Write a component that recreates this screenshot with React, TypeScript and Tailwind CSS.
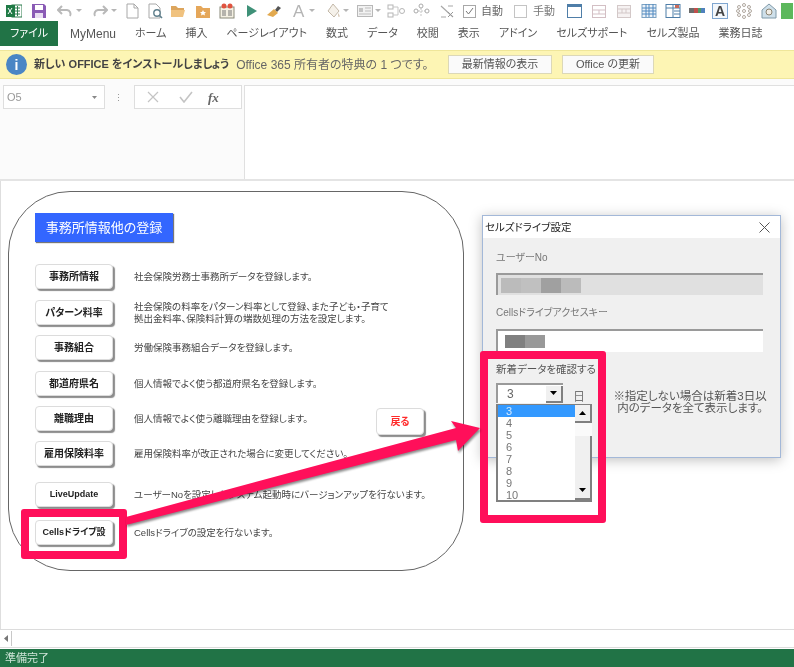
const tabs = ["MyMenu", "ホーム", "挿入", "ページレイアウト", "数式", "データ", "校閲", "表示", "アドイン", "セルズサポート", "セルズ製品", "業務日誌"];

const rows = [
  { label: "事務所情報", text: ["社会保険労務士事務所データを登録します。"], top: "mt-[22px]" },
  { label: "パターン料率", text: ["社会保険の料率をパターン料率として登録、また子ども・子育て", "拠出金料率、保険料計算の端数処理の方法を設定します。"], top: "mt-[11px]" },
  { label: "事務組合", text: ["労働保険事務組合データを登録します。"], top: "mt-[10px]" },
  { label: "都道府県名", text: ["個人情報でよく使う都道府県名を登録します。"], top: "mt-[11px]" },
  { label: "離職理由", text: ["個人情報でよく使う離職理由を登録します。"], top: "mt-[10px]" },
  { label: "雇用保険料率", text: ["雇用保険料率が改正された場合に変更してください。"], top: "mt-[10px]" },
  { label: "LiveUpdate", text: ["ユーザーNoを設定したシステム起動時にバージョンアップを行ないます。"], top: "mt-[16px]", small: true },
  { label: "Cellsドライブ設", text: ["Cellsドライブの設定を行ないます。"], top: "mt-[13px]", small: true },
];

const listItems = ["3", "4", "5", "6", "7", "8", "9", "10"];

function Caret({ className = "" }: { className?: string }) {
  return (
    <svg width="6" height="4" viewBox="0 0 6 4" className={className}>
      <path d="M0 0h6L3 3z" fill="#b5b5b5" />
    </svg>
  );
}

function Icon({ w = 16, className = "", children }: { w?: number; className?: string; children: React.ReactNode }) {
  return (
    <svg width={w} height="16" viewBox={`0 0 ${w} 16`} className={`shrink-0 ${className}`}>
      {children}
    </svg>
  );
}

function Toolbar() {
  return (
    <div className="flex h-[21px] items-center pl-[6px] pt-[1px]">
      <Icon>
        <rect x="6" y="2" width="10" height="12" fill="#fff" stroke="#2a7a4b" />
        <path d="M9 5h5M9 8h5M9 11h5M11.5 3v10" stroke="#2a7a4b" />
        <rect x="0" y="2" width="9" height="12" fill="#1f7a45" />
        <path d="M2 5l4 6M6 5l-4 6" stroke="#fff" />
      </Icon>
      <Icon className="ml-[9px]">
        <path d="M1 1h12l2 2v12H1z" fill="#8a5bb5" />
        <rect x="4" y="2" width="8" height="5" fill="#fff" />
        <rect x="4" y="10" width="8" height="5" fill="#e9dff2" />
      </Icon>
      <Icon className="ml-[10px]">
        <path d="M5 3L1 7l4 4" fill="none" stroke="#b9b9b9" strokeWidth="2" />
        <path d="M2 7h8a4 4 0 0 1 3 6" fill="none" stroke="#b9b9b9" strokeWidth="2" />
      </Icon>
      <Caret className="ml-[3px]" />
      <Icon className="ml-[10px]">
        <path d="M11 3l4 4-4 4" fill="none" stroke="#b9b9b9" strokeWidth="2" />
        <path d="M14 7H6a4 4 0 0 0-3 6" fill="none" stroke="#b9b9b9" strokeWidth="2" />
      </Icon>
      <Caret className="ml-[3px]" />
      <Icon w={13} className="ml-[9px]">
        <path d="M1 1h7l4 4v10H1z" fill="#fff" stroke="#a8a8a8" />
        <path d="M8 1v4h4" fill="none" stroke="#a8a8a8" />
      </Icon>
      <Icon className="ml-[9px]">
        <path d="M1 1h7l4 4v10H1z" fill="#fff" stroke="#a8a8a8" />
        <circle cx="9" cy="10" r="3.2" fill="#fff" stroke="#5f7f8c" strokeWidth="1.4" />
        <path d="M11 12l3 3" stroke="#5f7f8c" strokeWidth="1.6" />
      </Icon>
      <Icon className="ml-[6px]">
        <path d="M1 3h5l2 2h6v2H1z" fill="#dca55d" />
        <path d="M1 7h14l-2 7H1z" fill="#f0c27f" />
      </Icon>
      <Icon className="ml-[9px]">
        <path d="M1 3h5l2 2h7v10H1z" fill="#e5a75a" />
        <path d="M8 7l1 2h2l-1.500 1.500.5 2L8 11.500 6 12.500l.5-2L5 9h2z" fill="#fff" />
      </Icon>
      <Icon className="ml-[8px]">
        <rect x="1" y="4" width="14" height="11" fill="#f4f0e3" stroke="#8a8a7a" />
        <path d="M3 8h4M3 10h4M3 12h4M9 8h4M9 10h4M9 12h4" stroke="#777" />
        <circle cx="5" cy="3" r="2.500" fill="#e0533f" />
        <circle cx="11" cy="3" r="2.500" fill="#e0533f" />
      </Icon>
      <Icon w={10} className="ml-[12px]">
        <path d="M0 2l10 6-10 6z" fill="#3f9178" />
      </Icon>
      <Icon className="ml-[9px]">
        <path d="M9 7l3-4 3 2-4 4z" fill="#555" />
        <path d="M1 12l7-6 4 4-5 4z" fill="#e2a94f" />
      </Icon>
      <span className="ml-[11px] w-[12px] text-[17px] leading-none text-[#b4b4b4]">A</span>
      <Caret className="ml-[4px]" />
      <Icon className="ml-[10px]">
        <path d="M8 1l6 7-5 6-6-6z" fill="#f5f1ea" stroke="#c3b8a8" />
        <path d="M13 10c2 2 2 4 1 4s-1-2-1-4z" fill="#d6c7b4" />
      </Icon>
      <Caret className="ml-[2px]" />
      <Icon className="ml-[8px]">
        <rect x="0.500" y="2.500" width="15" height="11" fill="#f2f2f2" stroke="#b8b8b8" />
        <rect x="2" y="5" width="4" height="4" fill="#c4c4c4" />
        <path d="M8 5h6M8 8h6M2 11h12" stroke="#bdbdbd" />
      </Icon>
      <Caret className="ml-[2px]" />
      <Icon w={18} className="ml-[6px]">
        <rect x="1" y="2" width="5" height="4" fill="#fff" stroke="#b5b5b5" />
        <rect x="1" y="10" width="5" height="4" fill="#fff" stroke="#b5b5b5" />
        <path d="M6 4h5M6 12h5M11 4v8" stroke="#c5c5c5" />
        <circle cx="15" cy="8" r="2.500" fill="#fff" stroke="#b5b5b5" />
      </Icon>
      <Icon w={18} className="ml-[8px]">
        <path d="M8 2v12M2 8h12" stroke="#c5c5c5" strokeDasharray="2 1" />
        <circle cx="8" cy="3" r="2" fill="#fff" stroke="#aaa" />
        <circle cx="3" cy="8" r="2" fill="#fff" stroke="#aaa" />
        <circle cx="14" cy="8" r="2" fill="#fff" stroke="#aaa" />
      </Icon>
      <Icon w={18} className="ml-[7px]">
        <path d="M3 3l12 11M15 3h-5M3 14h5" stroke="#a8a8a8" strokeWidth="1.200" />
        <path d="M10 9l5 5M15 9l-5 5" stroke="#999" />
      </Icon>
      <span className="ml-[7px] flex h-[13px] w-[13px] shrink-0 items-center justify-center border border-[#a8a8a8] bg-white">
        <svg width="9" height="8" viewBox="0 0 9 8">
          <path d="M1 4l2.500 3L8 1" fill="none" stroke="#777" />
        </svg>
      </span>
      <span className="ml-[5px] text-[11px] leading-none text-[#666]">自動</span>
      <span className="ml-[11px] h-[13px] w-[13px] shrink-0 border border-[#c4c4c4] bg-white" />
      <span className="ml-[6px] text-[11px] leading-none text-[#777]">手動</span>
      <Icon className="ml-[12px]">
        <rect x="0.500" y="1.500" width="14" height="13" fill="#fff" stroke="#4f7ea8" />
        <rect x="0.500" y="1.500" width="14" height="2.500" fill="#4f7ea8" />
      </Icon>
      <Icon className="ml-[9px]">
        <rect x="0.500" y="2.500" width="13" height="12" fill="#fff" stroke="#d3bfc4" />
        <path d="M0 7h14M0 11h14M7 7v4" stroke="#d3bfc4" />
      </Icon>
      <Icon className="ml-[9px]">
        <rect x="0.500" y="2.500" width="13" height="12" fill="#f6f2f2" stroke="#d3c8c8" />
        <path d="M0 6h14M0 10h14M5 6v4M9 6v4" stroke="#d3c8c8" />
      </Icon>
      <Icon className="ml-[8px]">
        <rect x="1" y="1.500" width="14" height="13" fill="#eef3f8" stroke="#7da3c4" />
        <path d="M1 5h14M1 8h14M1 11h14M5 1v13M8 1v13M12 1v13" stroke="#4f88c0" />
      </Icon>
      <Icon className="ml-[8px]">
        <rect x="1" y="1.500" width="14" height="13" fill="#fff" stroke="#4f7ea8" />
        <path d="M8 1v14M1 5h14M9 8h6M9 11h6" stroke="#4f7ea8" />
        <rect x="10" y="2" width="4" height="3" fill="#c86a5a" />
      </Icon>
      <Icon className="ml-[8px]">
        <rect x="0" y="5" width="5" height="5" fill="#6b6b6b" />
        <rect x="5" y="5" width="4" height="5" fill="#c0504d" />
        <rect x="9" y="5" width="3" height="5" fill="#4f9b6a" />
        <rect x="12" y="5" width="4" height="5" fill="#4f81bd" />
      </Icon>
      <span className="ml-[7px] flex h-[16px] w-[16px] shrink-0 items-center justify-center border border-[#7fa6d0] bg-[#f3f7fb] text-[14px] font-bold leading-none text-[#444]">A</span>
      <Icon className="ml-[8px]">
        <g fill="none" stroke="#b0a8a0">
          <circle cx="3" cy="4" r="1.500" /><circle cx="8" cy="2" r="1.500" /><circle cx="13" cy="4" r="1.500" />
          <circle cx="2" cy="8" r="1.500" /><circle cx="8" cy="8" r="1.500" /><circle cx="14" cy="8" r="1.500" />
          <circle cx="3" cy="12" r="1.500" /><circle cx="8" cy="14" r="1.500" /><circle cx="13" cy="12" r="1.500" />
        </g>
      </Icon>
      <Icon className="ml-[9px]">
        <path d="M8 1l7 6v8H1V7z" fill="#cfe0ea" stroke="#7f99a8" />
        <circle cx="8" cy="9" r="3" fill="#f2eee6" stroke="#8a8270" />
      </Icon>
      <span className="ml-[4px] h-[16px] w-[12px] shrink-0 bg-[#5cb85c]" />
    </div>
  );
}

function PanelButton({ label, small }: { label: string; small?: boolean }) {
  return (
    <div className={`flex h-[25px] w-[78px] shrink-0 items-center justify-center rounded-[4px] border border-[#dcdcdc] bg-white font-bold leading-none text-[#222] shadow-[2px_2px_1px_#8c8c8c] ${small ? "text-[9px]" : "text-[10px]"}`}>
      {label}
    </div>
  );
}

function ListArrow({ up }: { up?: boolean }) {
  return (
    <div className="flex h-[18px] items-center justify-center border-r-2 border-b-2 border-[#808080] bg-[#f0f0f0]">
      <svg width="7" height="4" viewBox="0 0 7 4">
        <path d={up ? "M0 4h7L3.500 0z" : "M0 0h7L3.500 4z"} fill="#000" />
      </svg>
    </div>
  );
}

function Dialog() {
  return (
    <div className="absolute left-[481px] top-[34px] h-[243px] w-[299px] border border-[#a3b8d8] bg-[#f0f0f0] shadow-[0_2px_12px_rgba(0,0,0,0.25)]">
      <div className="flex h-[22px] items-center justify-between bg-white pl-[2px] pr-[10px] text-[10.500px] leading-none text-[#222]">
        <span>セルズドライブ設定</span>
        <svg width="11" height="11" viewBox="0 0 11 11">
          <path d="M0.500 0.500l10 10M10.500 0.500l-10 10" stroke="#555" />
        </svg>
      </div>
      <div className="flex flex-col pl-[13px] text-[10px] leading-[12px] text-[#777]">
        <div className="mt-[14px]">ユーザーNo</div>
        <div className="mt-[9px] flex h-[22px] w-[267px] items-center border-t-2 border-l-2 border-[#9a9a9a] bg-[#e0e0e0] pl-[3px]">
          <span className="h-[15px] w-[20px] bg-[#bbbbbb]" />
          <span className="h-[15px] w-[20px] bg-[#c0c0c0]" />
          <span className="h-[15px] w-[20px] bg-[#a0a0a0]" />
          <span className="h-[15px] w-[20px] bg-[#bbbbbb]" />
        </div>
        <div className="mt-[12px]">Cellsドライブアクセスキー</div>
        <div className="mt-[10px] flex h-[23px] w-[267px] items-center border-t-2 border-l-2 border-[#9a9a9a] bg-white pl-[7px]">
          <span className="h-[13px] w-[20px] bg-[#808080]" />
          <span className="h-[13px] w-[20px] bg-[#999999]" />
        </div>
        <div className="mt-[11px] whitespace-nowrap text-[10.500px] text-[#555]">新着データを確認する</div>
        <div className="relative mt-[8px] flex items-start">
          <div className="flex h-[20px] w-[67px] shrink-0 items-center border-t-2 border-l-2 border-[#9a9a9a] bg-white pl-[9px] text-[12px] text-[#666]">
            <span className="flex-1">3</span>
            <span className="flex h-[17px] w-[17px] items-center justify-center border-r-2 border-b-2 border-[#808080] bg-[#f0f0f0]">
              <svg width="7" height="4" viewBox="0 0 7 4">
                <path d="M0 0h7L3.500 4z" fill="#000" />
              </svg>
            </span>
          </div>
          <span className="ml-[10px] mt-[8px] text-[12px] text-[#777]">日</span>
          <div className="ml-[24px] mt-[7px] w-[162px] text-center text-[11.500px] text-[#555]">
            ※指定しない場合は新着3日以
            <br />
            内のデータを全て表示します。
          </div>
          {/* dropdown list */}
          <div className="absolute left-0 top-[21px] flex h-[98px] w-[96px] border-2 border-t border-r-0 border-[#808080] bg-white text-[11px] text-[#777]">
            <div className="flex-1">
              {listItems.map((n, i) => (
                <div key={n} className={`h-[12px] pl-[8px] leading-[12px] ${i === 0 ? "bg-[#3399ff] text-[#d6e9ff]" : ""}`}>
                  {n}
                </div>
              ))}
            </div>
            <div className="flex w-[17px] flex-col bg-[#f0f0f0]">
              <ListArrow up />
              <div className="h-[13px] bg-[#fafafa]" />
              <div className="flex-1 border-r-2 border-[#808080]" />
              <ListArrow />
            </div>
          </div>
        </div>
      </div>
    </div>
  );
}

export default function App() {
  return (
    <div className="relative flex h-[667px] w-[794px] flex-col overflow-hidden bg-white font-['Liberation_Sans','Noto_Sans_CJK_JP',sans-serif] blur-[0.5px] [font-feature-settings:'palt']">
      <Toolbar />

      {/* ribbon tabs */}
      <div className="flex h-[25px] items-center pr-0 text-[11px] leading-none text-[#555]">
        <div className="flex h-[25px] w-[58px] items-center justify-center bg-[#217346] text-white">ファイル</div>
        <div className="ml-[12px] flex gap-[19px]">
          {tabs.map((t) => (
            <span key={t} className={`whitespace-nowrap ${t === "MyMenu" ? "text-[12px]" : ""}`}>{t}</span>
          ))}
        </div>
      </div>

      {/* update notice */}
      <div className="mt-[4px] flex h-[29px] items-center border-y border-[#efe69a] bg-[#fdf5b4] pl-[6px] text-[11px] leading-none">
        <span className="flex h-[21px] w-[21px] shrink-0 items-center justify-center rounded-full bg-[#4a86c5] text-[14px] font-bold text-white">i</span>
        <span className="ml-[7px] whitespace-nowrap font-bold text-[#444]">新しい OFFICE をインストールしましょう</span>
        <span className="ml-[7px] whitespace-nowrap text-[12px] text-[#666]">Office 365 所有者の特典の 1 つです。</span>
        <span className="absolute left-[448px] flex h-[19px] w-[104px] items-center justify-center border border-[#dcd8b8] bg-[#fafafa] text-[#555]">最新情報の表示</span>
        <span className="absolute left-[562px] flex h-[19px] w-[92px] items-center justify-center border border-[#dcd8b8] bg-[#fafafa] text-[#555]">Office の更新</span>
      </div>

      {/* formula bar */}
      <div className="flex h-[102px] border-b-2 border-[#e4e4e4] bg-[#fbfbfb] pt-[6px]">
        <div className="ml-[3px] flex h-[24px] w-[102px] items-center justify-between border border-[#dedede] bg-white px-[3px] text-[11px] text-[#999]">
          <span>O5</span>
          <svg width="5" height="3" viewBox="0 0 5 3" className="mr-[4px]">
            <path d="M0 0h5L2.500 3z" fill="#888" />
          </svg>
        </div>
        <div className="ml-[13px] flex h-[24px] flex-col justify-center gap-[2px]">
          <span className="h-[1px] w-[1px] bg-[#999]" />
          <span className="h-[1px] w-[1px] bg-[#999]" />
          <span className="h-[1px] w-[1px] bg-[#999]" />
        </div>
        <div className="ml-[15px] flex h-[24px] w-[108px] items-center border border-[#dedede] bg-white pl-[12px]">
          <svg width="12" height="12" viewBox="0 0 12 12">
            <path d="M1 1l10 10M11 1L1 11" stroke="#c4c4c4" strokeWidth="1.200" />
          </svg>
          <svg width="14" height="12" viewBox="0 0 14 12" className="ml-[20px]">
            <path d="M1 6l4 5 8-10" fill="none" stroke="#c4c4c4" strokeWidth="1.600" />
          </svg>
          <span className="ml-[15px] font-['Liberation_Serif',serif] text-[13px] font-bold italic leading-none text-[#666]">fx</span>
        </div>
        <div className="ml-[2px] flex-1 border-l border-t border-[#e0e0e0] bg-white" />
      </div>

      {/* sheet */}
      <div className="relative flex-1 border-l border-[#dedede] pl-[7px] pt-[10px]">
        <div className="relative flex h-[380px] w-[456px] flex-col rounded-[62px] border border-[#666] bg-white pl-[26px] pt-[21px]">
          <div className="flex h-[29px] w-[138px] items-center justify-center bg-[#3366ff] text-[13px] text-white shadow-[1px_1px_1px_#777]">事務所情報他の登録</div>
          {rows.map((r) => (
            <div key={r.label} className={`flex items-center ${r.top}`}>
              <PanelButton label={r.label} small={r.small} />
              <div className="ml-[21px] whitespace-nowrap text-[9.500px] leading-[12px] text-[#444]">
                {r.text.map((line) => (
                  <div key={line}>{line}</div>
                ))}
              </div>
            </div>
          ))}
          <div className="absolute left-[367px] top-[216px] flex h-[27px] w-[48px] items-center justify-center rounded-[4px] border border-[#dcdcdc] bg-white text-[10px] font-bold leading-none text-[#ff2a2a] shadow-[2px_2px_1px_#8c8c8c]">戻る</div>
        </div>

        <Dialog />

        {/* callout boxes and arrow */}
        <div className="absolute left-[20px] top-[328px] h-[50px] w-[106px] rounded-[3px] border-[8px] border-[#ff0f5a]" />
        <div className="absolute left-[479px] top-[170px] h-[172px] w-[126px] rounded-[3px] border-[8px] border-[#ff0f5a]" />
        <svg width="794" height="447" viewBox="0 0 794 447" className="pointer-events-none absolute left-0 top-0 drop-shadow-[1px_2px_1px_rgba(0,0,0,0.45)]">
          <path d="M125 336L455 247L450 240L479 247L457 270L455 259L125 344Z" fill="#ff0f5a" />
        </svg>
      </div>

      {/* horizontal scrollbar */}
      <div className="flex h-[19px] items-center border-y border-[#dcdcdc] bg-white">
        <div className="flex h-[15px] w-[12px] items-center justify-center border-r border-[#c8c8c8]">
          <svg width="4" height="7" viewBox="0 0 4 7">
            <path d="M4 0v7L0 3.500z" fill="#777" />
          </svg>
        </div>
      </div>

      <div className="mt-[1px] flex h-[18px] items-center bg-[#217346] pl-[5px] text-[11px] leading-none text-[#cfe5d8]">準備完了</div>
    </div>
  );
}
